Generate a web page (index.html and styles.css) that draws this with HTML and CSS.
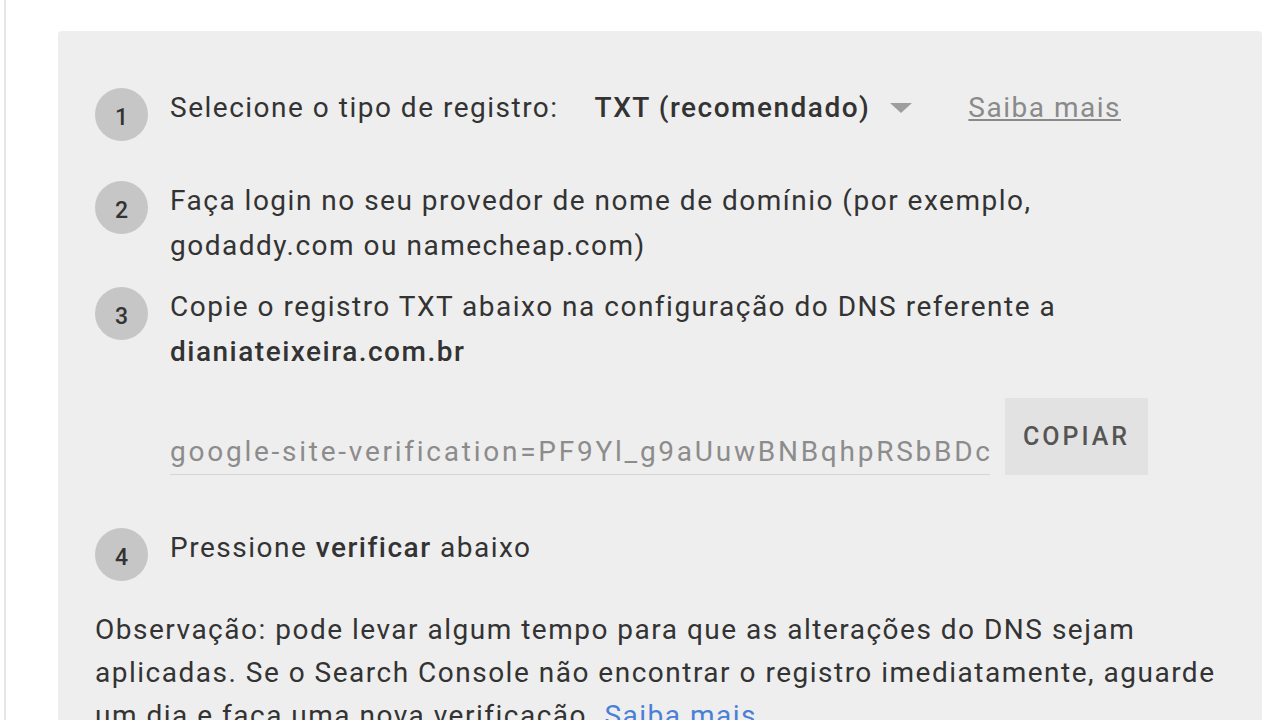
FILE: index.html
```html
<!DOCTYPE html>
<html lang="pt-BR">
<head>
    <meta charset="UTF-8">
    <meta name="viewport" content="width=device-width, initial-scale=1.0">
    <title>Verificação de domínio</title>
    <link rel="stylesheet" href="styles.css">
</head>
<body>
    <div class="page">
        <div class="verify-box">
            <!-- passo 1 -->
            <div class="step step-1">
                <span class="step-num">1</span>
                <div class="step-text select-row">
                    <span>Selecione o tipo de registro:</span>
                    <span class="record-type">TXT (recomendado)<span class="caret"></span></span>
                    <a class="more-link" href="#">Saiba mais</a>
                </div>
            </div>
            <!-- passo 2 -->
            <div class="step step-2">
                <span class="step-num">2</span>
                <div class="step-text">Faça login no seu provedor de nome de domínio (por exemplo, godaddy.com ou namecheap.com)</div>
            </div>
            <!-- passo 3 -->
            <div class="step step-3">
                <span class="step-num">3</span>
                <div class="step-text">Copie o registro TXT abaixo na configuração do DNS referente a <b>dianiateixeira.com.br</b></div>
            </div>
            <div class="copy-row">
                <input class="txt-record" readonly value="google-site-verification=PF9Yl_g9aUuwBNBqhpRSbBDcQx2mFhK0fZt7yW1vEo">
                <button class="copy-btn">COPIAR</button>
            </div>
            <!-- passo 4 -->
            <div class="step step-4">
                <span class="step-num">4</span>
                <div class="step-text">Pressione <b>verificar</b> abaixo</div>
            </div>
            <p class="note">Observação: pode levar algum tempo para que as alterações do DNS sejam aplicadas. Se o Search Console não encontrar o registro imediatamente, aguarde um dia e faça uma nova verificação. <a href="#">Saiba mais</a></p>
        </div>
    </div>
</body>
</html>
```

FILE: styles.css
```css
html, body {
    margin: 0;
    background: #fff;
}

body {
    font-family: Roboto, "Noto Sans", Arial, sans-serif;
    color: #333;
    overflow: hidden;
}

.page {
    margin-left: 4px;
    border-left: 2px solid #e6e6e6;
    height: 720px;
    padding: 31px 18px 0 52px;
    box-sizing: border-box;
}

.verify-box {
    background: #eeeeee;
    border-radius: 4px;
    padding: 54px 37px 40px 37px;
    min-height: 760px;
    box-sizing: border-box;
}

.step {
    display: flex;
    align-items: flex-start;
}

.step-num {
    flex: none;
    width: 53px;
    height: 53px;
    box-sizing: border-box;
    padding-top: 5px;
    margin-top: 3px;
    margin-right: 22px;
    border-radius: 50%;
    background: #c6c6c6;
    color: #333;
    font-size: 23px;
    font-weight: 500;
    display: flex;
    align-items: center;
    justify-content: center;
}

.step-text {
    font-size: 28px;
    line-height: 45px;
    letter-spacing: 1.5px;
    max-width: 980px;
}

.step-text b {
    font-weight: 500;
}

.step-2 {
    margin-top: 37px;
}

.step-3 {
    margin-top: 16px;
}

.step-4 {
    margin-top: 50px;
}

.select-row {
    display: flex;
    align-items: center;
}

.record-type {
    font-weight: 500;
    margin-left: 36px;
    display: flex;
    align-items: center;
}

.caret {
    width: 0;
    height: 0;
    margin-left: 20px;
    border-left: 11px solid transparent;
    border-right: 11px solid transparent;
    border-top: 10px solid #9e9e9e;
}

.more-link {
    margin-left: 56px;
    color: #8a8a8a;
    text-decoration: underline;
}

.copy-row {
    display: flex;
    align-items: flex-end;
    margin-top: 24px;
    margin-left: 75px;
}

.txt-record {
    width: 820px;
    height: 46px;
    box-sizing: border-box;
    padding: 0;
    border: none;
    border-bottom: 1px solid #d6d6d6;
    background: transparent;
    font-family: inherit;
    font-size: 28px;
    letter-spacing: 2.75px;
    color: #8c8c8c;
    outline: none;
}

.copy-btn {
    width: 143px;
    height: 77px;
    margin-left: 15px;
    padding: 0;
    border: none;
    background: #e2e2e2;
    color: #555;
    font-family: inherit;
    font-size: 25px;
    font-weight: 500;
    letter-spacing: 3px;
}

.note {
    margin: 27px 0 0 0;
    font-size: 28px;
    line-height: 43px;
    letter-spacing: 1.5px;
}

.note a {
    color: #4a7fd8;
    text-decoration: none;
}
```
